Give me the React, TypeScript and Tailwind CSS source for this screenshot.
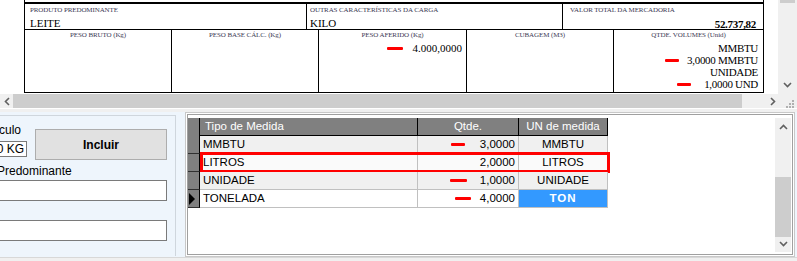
import React from 'react';

const SERIF = { fontFamily: '"Liberation Serif", "Times New Roman", serif' };
const SANS = { fontFamily: '"Liberation Sans", Arial, sans-serif' };

function Dash({ className = '' }: { className?: string }) {
  return <span className={`inline-block h-[3px] w-[14px] bg-[#ff0000] rounded-[1px] ${className}`} />;
}

function Label({ children, center }: { children: React.ReactNode; center?: boolean }) {
  return (
    <div className={`text-[7px] leading-[9px] text-[#3d3a55] tracking-[-0.1px] ${center ? 'text-center' : ''}`}>
      {children}
    </div>
  );
}

const ROWS = [
  { tipo: 'MMBTU', qtde: '3,0000', un: 'MMBTU', dash: 'mr-[15px]', bg: 'bg-[#f0f0f0]' },
  { tipo: 'LITROS', qtde: '2,0000', un: 'LITROS', dash: '', bg: 'bg-[#fafafa]' },
  { tipo: 'UNIDADE', qtde: '1,0000', un: 'UNIDADE', dash: 'mr-[13px] w-[17px]', bg: 'bg-[#f0f0f0]' },
  { tipo: 'TONELADA', qtde: '4,0000', un: 'TON', dash: 'mr-[9px] w-[16px]', bg: 'bg-white' },
];

export default function App() {
  return (
    <div className="w-[797px] h-[261px] overflow-hidden bg-[#f0f0f0] flex flex-col" style={SANS}>
      {/* document preview */}
      <div className="flex h-[94px] shrink-0">
        <div className="flex-1 bg-white">
          <div className="ml-[24px] w-[740px] h-[93px] border-l border-r border-b border-black flex flex-col" style={SERIF}>
            <div className="h-[2px]" />
            <div className="h-[2px] bg-black" />
            <div className="flex h-[26px] border-b border-black">
              <div className="w-[282px] border-r border-black px-[5px] pt-[2px]">
                <Label>PRODUTO PREDOMINANTE</Label>
                <div className="text-[11px] leading-[13px] mt-[2px] text-black">LEITE</div>
              </div>
              <div className="w-[256px] border-r border-black px-[3px] pt-[2px]">
                <Label>OUTRAS CARACTERÍSTICAS DA CARGA</Label>
                <div className="text-[11px] leading-[13px] mt-[2px] text-black">KILO</div>
              </div>
              <div className="flex-1 px-[7px] pt-[2px]">
                <Label>VALOR TOTAL DA MERCADORIA</Label>
                <div className="text-[11px] leading-[13px] mt-[3px] text-black text-right font-bold tracking-[-0.3px]">52.737,82</div>
              </div>
            </div>
            <div className="flex flex-1">
              <div className="w-[147px] border-r border-black pt-[1px]">
                <Label center>PESO BRUTO (Kg)</Label>
              </div>
              <div className="w-[147px] border-r border-black pt-[1px]">
                <Label center>PESO BASE CÁLC. (Kg)</Label>
              </div>
              <div className="w-[148px] border-r border-black pt-[1px]">
                <Label center>PESO AFERIDO (Kg)</Label>
                <div className="flex items-center justify-end pr-[4px] text-[11px] leading-[12px] mt-[2px]">
                  <Dash className="w-[16px] mr-[10px]" />
                  4.000,0000
                </div>
              </div>
              <div className="w-[147px] border-r border-black pt-[1px]">
                <Label center>CUBAGEM (M3)</Label>
              </div>
              <div className="flex-1 pt-[1px]">
                <Label center>QTDE. VOLUMES (Unid)</Label>
                <div className="text-[11px] leading-[12px] mt-[2px] pr-[5px] text-right tracking-[-0.3px]">
                  <div>MMBTU</div>
                  <div className="flex items-center justify-end"><Dash className="w-[12px] mr-[8px]" />3,0000 MMBTU</div>
                  <div>UNIDADE</div>
                  <div className="flex items-center justify-end"><Dash className="w-[11px] mr-[13px]" />1,0000 UND</div>
                </div>
              </div>
            </div>
          </div>
        </div>
        {/* vertical scrollbar */}
        <div className="w-[19px] bg-[#f0f0f0] flex flex-col items-center">
          <div className="w-[15px] h-[3px] bg-[#cdcdcd]" />
          <div className="flex-1" />
          <svg width="9" height="6" viewBox="0 0 9 6" className="mb-[6px]">
            <path d="M1 1 L4.5 4.5 L8 1" stroke="#606060" strokeWidth="1.6" fill="none" />
          </svg>
        </div>
      </div>

      {/* horizontal scrollbar */}
      <div className="flex h-[14px] shrink-0 bg-[#f0f0f0] items-center">
        <div className="w-[13px] flex justify-center">
          <svg width="6" height="9" viewBox="0 0 6 9">
            <path d="M5 1 L1.5 4.5 L5 8" stroke="#606060" strokeWidth="1.6" fill="none" />
          </svg>
        </div>
        <div className="w-[729px] h-full bg-[#cdcdcd]" />
        <div className="w-[28px]" />
        <svg width="6" height="9" viewBox="0 0 6 9">
          <path d="M1 1 L4.5 4.5 L1 8" stroke="#606060" strokeWidth="1.6" fill="none" />
        </svg>
        <div className="flex-1 flex justify-end pr-[3px] pt-[5px]">
          <svg width="8" height="8" viewBox="0 0 8 8" fill="#b0b0b0">
            <rect x="6" y="0" width="2" height="2" />
            <rect x="3" y="3" width="2" height="2" />
            <rect x="6" y="3" width="2" height="2" />
            <rect x="0" y="6" width="2" height="2" />
            <rect x="3" y="6" width="2" height="2" />
            <rect x="6" y="6" width="2" height="2" />
          </svg>
        </div>
      </div>

      <div className="h-[1px] bg-white" />
      <div className="h-[3px]" />

      {/* lower form */}
      <div className="flex h-[146px] shrink-0 bg-[#eef5fc] border-b border-[#d8d8d8]">
        <div className="w-[176px] mt-[3px] mb-[1px] border-t border-r border-[#cfd6dd] overflow-hidden">
          <div className="flex">
            <div className="w-[35px]">
              <div className="text-[12px] leading-[14px] mt-[7px] -ml-[1px] text-black whitespace-nowrap">culo</div>
              <div className="mt-[4px] h-[16px] w-[27px] bg-white border border-[#7a7a7a] border-l-0 text-[12px] leading-[14px] whitespace-nowrap flex justify-end pr-[2px] overflow-hidden">
                <span className="shrink-0">0 KG</span>
              </div>
            </div>
            <button className="mt-[13px] w-[132px] h-[31px] bg-[#e1e1e1] border border-[#adadad] text-[12px] font-bold text-black">
              Incluir
            </button>
          </div>
          <div className="text-[12px] leading-[14px] mt-[4px] -ml-[3px] text-black whitespace-nowrap">Predominante</div>
          <div className="mt-[2px] h-[21px] w-[167px] bg-white border border-[#7a7a7a] border-l-0" />
          <div className="mt-[19px] h-[21px] w-[167px] bg-white border border-[#7a7a7a] border-l-0" />
        </div>
        <div className="w-[9px]" />
        <div className="flex-1 mr-[2px] border border-[#c8c8c8] p-[1px] bg-white">
          <div className="h-full border border-[#a0a0a0] bg-white flex">
            <div className="flex-1 pt-[3px]">
              {/* header */}
              <div className="flex h-[18px] text-[11.5px] leading-[17px] text-white">
                <div className="w-[12px] bg-[#808080] border-r border-black" />
                <div className="w-[218px] bg-[#808080] border-r border-[#5a5a5a] pl-[5px] border-b border-black">Tipo de Medida</div>
                <div className="w-[101px] bg-[#808080] border-r border-[#5a5a5a] text-center border-b border-black">Qtde.</div>
                <div className="w-[89px] bg-[#808080] border-r border-black text-center border-b border-black">UN de medida</div>
              </div>
              {ROWS.map((r, i) => (
                <div key={r.tipo} className="flex h-[18px] text-[11.5px] leading-[17px] text-black relative">
                  <div className="w-[12px] bg-[#808080] border-r border-black border-b border-b-[#303030] flex items-center">
                    {i === 3 && (
                      <svg width="8" height="14" viewBox="0 0 8 14">
                        <path d="M1 1 L7 7 L1 13 Z" fill="#000" />
                      </svg>
                    )}
                  </div>
                  <div className={`w-[218px] ${r.bg} border-r border-b border-[#c0c0c0] pl-[3px]`}>{r.tipo}</div>
                  <div className={`w-[101px] ${r.bg} border-r border-b border-[#c0c0c0] flex items-center justify-end pr-[3px]`}>
                    {r.dash && <Dash className={r.dash} />}
                    {r.qtde}
                  </div>
                  <div
                    className={`w-[89px] border-r border-b border-[#c0c0c0] text-center ${
                      i === 3 ? 'bg-[#3399ff] text-white font-bold tracking-[1px]' : r.bg
                    }`}
                  >
                    {r.un}
                  </div>
                  {i === 1 && (
                    <div className="absolute left-[12px] top-[-2px] w-[410px] h-[21px] border-[3px] border-[#ff0000] pointer-events-none" />
                  )}
                </div>
              ))}
            </div>
            {/* grid scrollbar */}
            <div className="w-[16px] mt-[3px] mb-[2px] mr-[1px] bg-[#f0f0f0] flex flex-col items-center">
              <svg width="9" height="6" viewBox="0 0 9 6" className="mt-[6px]">
                <path d="M1 5 L4.5 1.5 L8 5" stroke="#606060" strokeWidth="1.6" fill="none" />
              </svg>
              <div className="h-[47px]" />
              <div className="w-full h-[60px] bg-[#cdcdcd]" />
              <div className="flex-1" />
              <svg width="9" height="6" viewBox="0 0 9 6" className="mb-[5px]">
                <path d="M1 1 L4.5 4.5 L8 1" stroke="#606060" strokeWidth="1.6" fill="none" />
              </svg>
            </div>
          </div>
        </div>
      </div>
      <div className="flex-1 bg-[#f0f0f0]" />
    </div>
  );
}
